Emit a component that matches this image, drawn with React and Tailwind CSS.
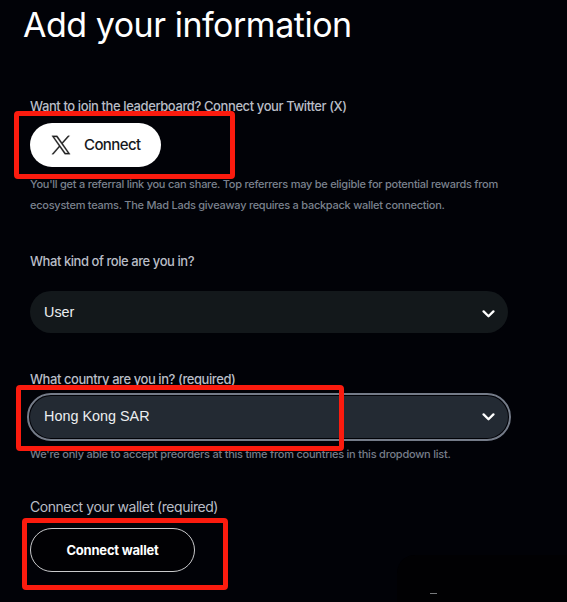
import { useState } from "react";

const Chevron = ({ className }) => (
  <svg
    className={`h-[8px] w-[13px] shrink-0 ${className}`}
    viewBox="0 0 13 8"
    fill="none"
    stroke="white"
    strokeWidth="2.3"
    strokeLinecap="round"
    strokeLinejoin="round"
  >
    <path d="M1.6 1.4 6.5 6.2 11.4 1.4" />
  </svg>
);

const XLogo = () => (
  <svg className="h-[20px] w-[20px] shrink-0" viewBox="0 0 24 24" fill="#222" stroke="#222" strokeWidth="0.4">
    <path d="M14.095 10.316 22.286 1h-1.94L13.23 9.088 7.551 1H1l8.59 12.231L1 23h1.94l7.51-8.543L16.449 23H23l-8.905-12.684ZM3.64 2.43h2.98l13.725 19.21h-2.98L3.64 2.43Z" />
  </svg>
);

// red frames that point at the steps to fill in
const Highlight = ({ className }) => (
  <div
    className={`pointer-events-none absolute rounded-[4px] border-[5px] border-[#fb1b0e] ${className}`}
  />
);

export default function App() {
  const [role, setRole] = useState("User");
  const [country, setCountry] = useState("Hong Kong SAR");

  return (
    <div className="relative h-[602px] w-[567px] overflow-hidden bg-[#010207] pl-[30px] font-['Inter',sans-serif] whitespace-nowrap">
      <h1 className="-ml-[7px] pt-[4px] text-[34px] leading-[42px] tracking-[-0.48px] text-white">
        Add your information
      </h1>

      <section className="relative mt-[50px]">
        <p className="text-[13px] leading-5 font-medium tracking-[-0.4px] text-[#b9bdc6]">
          Want to join the leaderboard? Connect your Twitter (X)
        </p>
        <button className="mt-[7px] flex h-[44px] w-[131px] items-center gap-[13px] rounded-full bg-white pl-[21px] text-[15px] font-medium tracking-[-0.6px] text-[#16181d]">
          <XLogo />
          <span>Connect</span>
        </button>
        <p className="mt-[7px] text-[11px] leading-[21px] font-medium tracking-[-0.26px] text-[#7a818d]">
          You'll get a referral link you can share. Top referrers may be eligible for potential rewards from
          <br />
          ecosystem teams. The Mad Lads giveaway requires a backpack wallet connection.
        </p>
        <Highlight className="-left-[16px] top-[15px] h-[68px] w-[221px]" />
      </section>

      <section className="mt-[35px]">
        <p className="text-[13px] leading-5 font-medium tracking-[-0.44px] text-[#b9bdc6]">
          What kind of role are you in?
        </p>
        <button
          onClick={() => setRole("User")}
          className="mt-[20px] flex h-[42px] w-[478px] items-center justify-between rounded-full bg-[#13181b] pr-[13px] pl-[14px] font-['Liberation_Sans',sans-serif] text-[14.4px] text-[#eceef0]"
        >
          <span className="pt-px">{role}</span>
          <Chevron className="mt-[3px]" />
        </button>
      </section>

      <section className="relative mt-[36px]">
        <p className="text-[13px] leading-5 font-medium tracking-[-0.43px] text-[#b9bdc6]">
          What country are you in? (required)
        </p>
        <button
          onClick={() => setCountry("Hong Kong SAR")}
          className="mt-[7px] flex h-[42px] w-[478px] items-center justify-between rounded-full bg-[#232a33] pr-[13px] pl-[14px] font-['Liberation_Sans',sans-serif] text-[14.4px] text-[#eceef0] outline-2 outline-offset-[1.5px] outline-[#747b88]"
        >
          <span>{country}</span>
          <Chevron className="mt-0" />
        </button>
        <p className="mt-[6px] text-[11px] leading-[21px] font-medium tracking-[-0.23px] text-[#767d89]">
          We're only able to accept preorders at this time from countries in this dropdown list.
        </p>
        <Highlight className="-left-[14px] top-[16px] h-[66px] w-[328px]" />
      </section>

      <section className="relative mt-[32px]">
        <p className="text-[14px] leading-5 tracking-[-0.45px] text-[#b9bdc6]">
          Connect your wallet (required)
        </p>
        <button className="mt-[11px] flex h-[44px] w-[165px] items-center justify-center rounded-full border border-[#c9cacc] bg-[#010104] pt-[2px] text-[13px] font-bold tracking-[-0.22px] text-white">
          Connect wallet
        </button>
        <Highlight className="-left-[8px] top-[21px] h-[72px] w-[206px]" />
      </section>

      <div className="absolute right-0 bottom-0 h-[47px] w-[170px] rounded-tl-[18px] bg-[#010103]">
        <span className="absolute bottom-[8px] left-[33px] h-px w-[7px] bg-[#77797c]" />
      </div>
    </div>
  );
}
